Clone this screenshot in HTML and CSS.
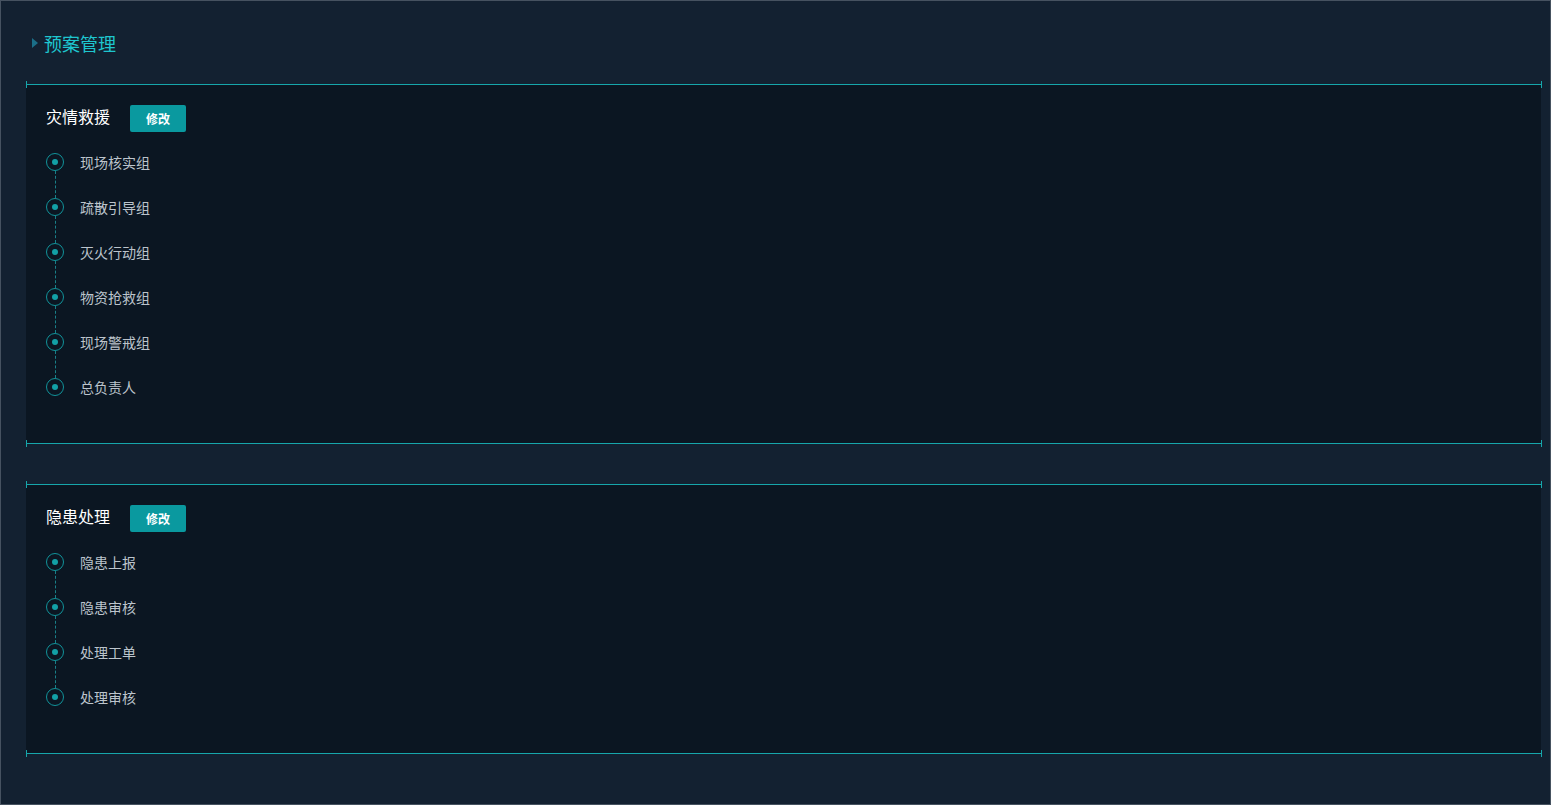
FILE: index.html
```html
<!DOCTYPE html>
<html lang="zh-CN">
<head>
    <meta charset="UTF-8">
    <meta name="viewport" content="width=device-width, initial-scale=1.0">
    <title>预案管理</title>
    <link rel="stylesheet" href="styles.css">
</head>
<body>
    <div class="page">
        <div class="page-title">
            <span class="title-arrow"></span>
            <span class="title-text">预案管理</span>
        </div>

        <div class="plan-card">
            <div class="plan-head">
                <span class="plan-name">灾情救援</span>
                <button class="edit-btn" type="button">修改</button>
            </div>
            <ul class="step-list">
                <li class="step"><span class="step-dot"></span><span class="step-text">现场核实组</span></li>
                <li class="step"><span class="step-dot"></span><span class="step-text">疏散引导组</span></li>
                <li class="step"><span class="step-dot"></span><span class="step-text">灭火行动组</span></li>
                <li class="step"><span class="step-dot"></span><span class="step-text">物资抢救组</span></li>
                <li class="step"><span class="step-dot"></span><span class="step-text">现场警戒组</span></li>
                <li class="step"><span class="step-dot"></span><span class="step-text">总负责人</span></li>
            </ul>
        </div>

        <div class="plan-card">
            <div class="plan-head">
                <span class="plan-name">隐患处理</span>
                <button class="edit-btn" type="button">修改</button>
            </div>
            <ul class="step-list">
                <li class="step"><span class="step-dot"></span><span class="step-text">隐患上报</span></li>
                <li class="step"><span class="step-dot"></span><span class="step-text">隐患审核</span></li>
                <li class="step"><span class="step-dot"></span><span class="step-text">处理工单</span></li>
                <li class="step"><span class="step-dot"></span><span class="step-text">处理审核</span></li>
            </ul>
        </div>
    </div>
</body>
</html>
```

FILE: styles.css
```css
/* page */
body {
    margin: 0;
    padding: 0;
    background-color: #132131;
    font-family: "Noto Sans CJK SC", "Noto Sans", sans-serif;
}

.page {
    box-sizing: border-box;
    height: 805px;
    border: 1px solid #465260;
    padding: 0 9px 0 25px;
    background-color: #132131;
}

/* title */
.page-title {
    height: 83px;
    display: flex;
    align-items: center;
    padding-left: 6px;
    gap: 6px;
}

.title-arrow {
    width: 0;
    height: 0;
    border-top: 5px solid transparent;
    border-bottom: 5px solid transparent;
    border-left: 6px solid #1b6f88;
}

.title-text {
    color: #1ec6cf;
    font-size: 18px;
    line-height: 24px;
}

/* card */
.plan-card {
    position: relative;
    background-color: #0b1622;
    border-top: 1px solid #16a6ab;
    border-bottom: 1px solid #16a6ab;
    padding: 20px;
    margin-bottom: 40px;
}

.plan-card::before,
.plan-card::after {
    content: "";
    position: absolute;
    top: -4px;
    bottom: -4px;
    width: 1px;
    background: linear-gradient(#16a6ab 0, #16a6ab 7px, transparent 7px, transparent calc(100% - 7px), #16a6ab calc(100% - 7px));
}

.plan-card::before {
    left: 0;
}

.plan-card::after {
    right: -1px;
}

.plan-head {
    display: flex;
    align-items: center;
    gap: 20px;
    height: 27px;
}

.plan-name {
    color: #ffffff;
    font-size: 16px;
    line-height: 22px;
    padding-bottom: 5px;
}

.edit-btn {
    width: 56px;
    height: 27px;
    padding: 0;
    border: none;
    border-radius: 2px;
    background-color: #0a999f;
    color: #ffffff;
    font-family: inherit;
    font-size: 12px;
    font-weight: bold;
    cursor: pointer;
}

/* steps */
.step-list {
    list-style: none;
    margin: 21px 0 0 0;
    padding: 0;
}

.step {
    position: relative;
    display: flex;
    align-items: flex-start;
    height: 45px;
}

.step:not(:last-child)::after {
    content: "";
    position: absolute;
    left: 9px;
    top: 18px;
    bottom: 0;
    border-left: 1px dashed #1a7f88;
}

.step-dot {
    box-sizing: border-box;
    width: 18px;
    height: 18px;
    border: 1.5px solid #11939a;
    border-radius: 50%;
    display: flex;
    align-items: center;
    justify-content: center;
}

.step-dot::before {
    content: "";
    width: 6px;
    height: 6px;
    border-radius: 50%;
    background-color: #12a0a6;
}

.step-text {
    margin-left: 16px;
    color: #bcc4cc;
    font-size: 14px;
    line-height: 18px;
}
```
